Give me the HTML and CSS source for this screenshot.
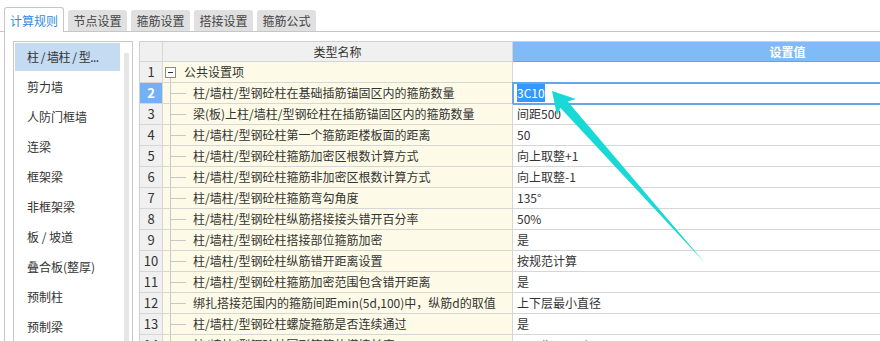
FILE: index.html
```html
<!DOCTYPE html>
<html lang="zh-CN">
<head>
  <meta charset="UTF-8" />
  <title>计算规则</title>
  <link rel="stylesheet" href="styles.css">
</head>
<body>
  <!-- Tab strip -->
  <div class="tabs">
    <div class="tab active">计算规则</div>
    <div class="tab">节点设置</div>
    <div class="tab">箍筋设置</div>
    <div class="tab">搭接设置</div>
    <div class="tab">箍筋公式</div>
  </div>

  <div class="main">
    <!-- Component list -->
    <div class="side">
      <ul class="side-list">
        <li class="selected">柱 / 墙柱 / 型...</li>
        <li>剪力墙</li>
        <li>人防门框墙</li>
        <li>连梁</li>
        <li>框架梁</li>
        <li>非框架梁</li>
        <li>板 / 坡道</li>
        <li>叠合板(整厚)</li>
        <li>预制柱</li>
        <li>预制梁</li>
      </ul>
      <div class="scroll"></div>
    </div>

    <!-- Settings grid -->
    <div class="grid">
      <div class="row head">
        <div class="num"></div>
        <div class="name">类型名称</div>
        <div class="val">设置值</div>
      </div>
      <div class="row">
        <div class="num">1</div>
        <div class="name group"><span class="toggle"></span>公共设置项</div>
        <div class="val"></div>
      </div>
      <div class="row selected">
        <div class="num">2</div>
        <div class="name child">柱/墙柱/型钢砼柱在基础插筋锚固区内的箍筋数量</div>
        <div class="val"><span class="sel-text">3C10</span></div>
      </div>
      <div class="row">
        <div class="num">3</div>
        <div class="name child">梁(板)上柱/墙柱/型钢砼柱在插筋锚固区内的箍筋数量</div>
        <div class="val">间距500</div>
      </div>
      <div class="row">
        <div class="num">4</div>
        <div class="name child">柱/墙柱/型钢砼柱第一个箍筋距楼板面的距离</div>
        <div class="val">50</div>
      </div>
      <div class="row">
        <div class="num">5</div>
        <div class="name child">柱/墙柱/型钢砼柱箍筋加密区根数计算方式</div>
        <div class="val">向上取整+1</div>
      </div>
      <div class="row">
        <div class="num">6</div>
        <div class="name child">柱/墙柱/型钢砼柱箍筋非加密区根数计算方式</div>
        <div class="val">向上取整-1</div>
      </div>
      <div class="row">
        <div class="num">7</div>
        <div class="name child">柱/墙柱/型钢砼柱箍筋弯勾角度</div>
        <div class="val">135°</div>
      </div>
      <div class="row">
        <div class="num">8</div>
        <div class="name child">柱/墙柱/型钢砼柱纵筋搭接接头错开百分率</div>
        <div class="val">50%</div>
      </div>
      <div class="row">
        <div class="num">9</div>
        <div class="name child">柱/墙柱/型钢砼柱搭接部位箍筋加密</div>
        <div class="val">是</div>
      </div>
      <div class="row">
        <div class="num">10</div>
        <div class="name child">柱/墙柱/型钢砼柱纵筋错开距离设置</div>
        <div class="val">按规范计算</div>
      </div>
      <div class="row">
        <div class="num">11</div>
        <div class="name child">柱/墙柱/型钢砼柱箍筋加密范围包含错开距离</div>
        <div class="val">是</div>
      </div>
      <div class="row">
        <div class="num">12</div>
        <div class="name child">绑扎搭接范围内的箍筋间距min(5d,100)中，纵筋d的取值</div>
        <div class="val">上下层最小直径</div>
      </div>
      <div class="row">
        <div class="num">13</div>
        <div class="name child">柱/墙柱/型钢砼柱螺旋箍筋是否连续通过</div>
        <div class="val">是</div>
      </div>
      <div class="row">
        <div class="num">14</div>
        <div class="name child">柱/墙柱/型钢砼柱圆形箍筋的搭接长度</div>
        <div class="val">max(lae,300)</div>
      </div>
    </div>
  </div>

  <!-- Annotation arrow drawn over the grid -->
  <svg class="arrow" width="880" height="341" viewBox="0 0 880 341">
    <polygon points="552,91 576,99 567.7,101.6 705,263 560.3,107.7 557,115.5" fill="#19d9d6" />
  </svg>
</body>
</html>
```

FILE: styles.css
```css
/* Base */
html, body {
  margin: 0;
  height: 100%;
  overflow: hidden;
}

body {
  font-family: "Noto Sans CJK SC", "Noto Sans", sans-serif;
  font-size: 12px;
  color: #333;
  background: #fff;
  position: relative;
}

/* Tabs */
.tabs {
  display: flex;
  align-items: flex-end;
  gap: 4px;
  height: 31px;
  padding-left: 4px;
  border-bottom: 1px solid #c6c6c6;
}

.tab {
  width: 59px;
  height: 21px;
  line-height: 21px;
  text-align: center;
  background: #e0e0e0;
  color: #444;
  border-radius: 3px 3px 0 0;
}

.tab.active {
  width: 60px;
  height: 25px;
  line-height: 25px;
  box-sizing: border-box;
  background: #fff;
  color: #2d8be3;
  border: 1px solid #c6c6c6;
  border-bottom: none;
  margin-bottom: -1px;
}

/* Main area */
.main {
  display: flex;
  margin-left: 4px;
  padding: 9px 0 0 8px;
  border-left: 1px solid #c6c6c6;
  height: calc(100% - 32px);
  box-sizing: border-box;
  overflow: hidden;
}

/* Left list */
.side {
  display: flex;
  width: 120px;
  flex-shrink: 0;
  border: 1px solid #c8c8c8;
  border-bottom: none;
  box-sizing: border-box;
}

.side-list {
  list-style: none;
  margin: 1px;
  padding: 0;
  width: 105px;
}

.side-list li {
  height: 28px;
  line-height: 28px;
  margin-bottom: 2px;
  padding-left: 12px;
  white-space: nowrap;
}

.side-list li.selected {
  background: #c4dbf1;
  letter-spacing: -0.5px;
}

.scroll {
  width: 5px;
  margin: 11px 0 0 3px;
  background: #e6e6e6;
}

/* Grid */
.grid {
  flex: 1;
  min-width: 0;
  margin-left: 6px;
  border-top: 1px solid #d0d0d0;
  border-left: 1px solid #d0d0d0;
  overflow: hidden;
}

.row {
  display: flex;
  height: 21px;
  line-height: 20px;
}

.row > div {
  flex-shrink: 0;
  height: 21px;
  box-sizing: border-box;
  border-right: 1px solid #d6d6d6;
  border-bottom: 1px solid #d6d6d6;
  white-space: nowrap;
  overflow: hidden;
}

.row.head {
  height: 20px;
}

.row.head > div {
  height: 20px;
  line-height: 19px;
}

.num {
  width: 23px;
  text-align: center;
  background: #f0f0f0;
  font-size: 13px;
}

.name {
  width: 350px;
  background: #fdfbe7;
  padding-left: 20px;
}

.val {
  width: 550px;
  padding-left: 4px;
}

.head .name {
  background: #f0f0f0;
  text-align: center;
  padding-left: 0;
}

.head .val {
  background: #7fbbf6;
  border-bottom-color: #63a2e6;
  color: #fff;
  font-weight: bold;
  text-align: center;
  padding-left: 0;
}

/* Tree connectors */
.name.group {
  display: flex;
  align-items: center;
  padding-left: 2px;
  background: linear-gradient(#c8c8c8, #c8c8c8) 7px 100% / 1px 5px no-repeat, #fdfbe7;
}

.toggle {
  display: inline-flex;
  align-items: center;
  justify-content: center;
  width: 9px;
  height: 9px;
  border: 1px solid #8a8a8a;
  background: #fff;
  margin-right: 8px;
}

.toggle::before {
  content: "";
  width: 5px;
  height: 1px;
  background: #333;
}

.name.child {
  padding-left: 30px;
  background:
    linear-gradient(#c8c8c8, #c8c8c8) 7px 0 / 1px 100% no-repeat,
    linear-gradient(#c8c8c8, #c8c8c8) 8px 10px / 15px 1px no-repeat,
    #fdfbe7;
}

/* Selected row */
.row.selected .num {
  background: #73b1f4;
  color: #fff;
  font-weight: bold;
}

.row.selected .val {
  outline: 2px solid #69a6e6;
  outline-offset: -1px;
}

.sel-text {
  background: #3399ff;
  color: #fff;
  padding: 1px 0;
}

/* Arrow overlay */
.arrow {
  position: absolute;
  top: 0;
  left: 0;
  pointer-events: none;
}
```
